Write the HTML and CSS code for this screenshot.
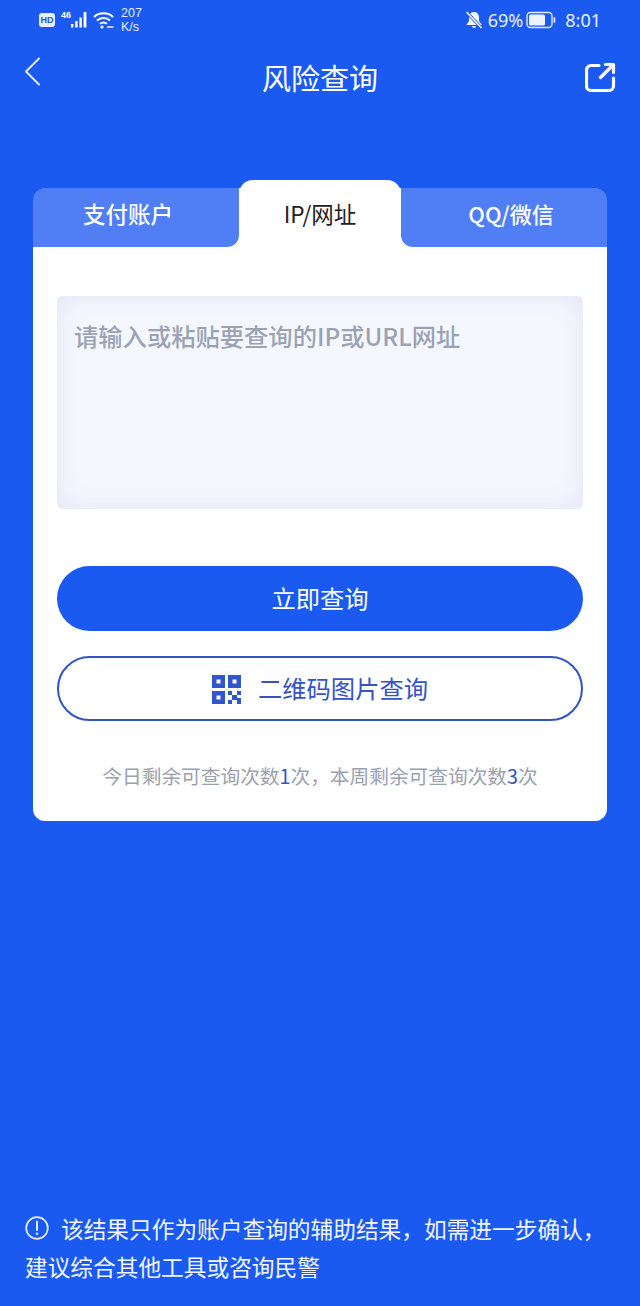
FILE: index.html
```html
<!DOCTYPE html>
<html lang="zh-CN">
<head>
    <meta charset="UTF-8">
    <meta name="viewport" content="width=device-width, initial-scale=1.0">
    <title>风险查询</title>
    <link rel="stylesheet" href="styles.css">
</head>
<body>
<div class="page">

    <div class="status">
        <div class="status-left">
            <span class="hd">HD</span>
            <span class="net">46</span>
            <svg class="signal" width="18" height="18" viewBox="0 0 18 18" fill="#fff">
                <rect x="0" y="13" width="2.4" height="3.5"/>
                <rect x="4.2" y="10" width="2.4" height="6.5"/>
                <rect x="8.4" y="6.5" width="2.4" height="10"/>
                <rect x="12.6" y="1" width="2.8" height="15.5"/>
            </svg>
            <svg class="wifi" width="21" height="18" viewBox="0 0 21 18" fill="none" stroke="#fff" stroke-width="2">
                <path d="M1 6 C6 1 15 1 20 6"/>
                <path d="M4 9.500 C7.500 6.300 13.500 6.300 17 9.500"/>
                <path d="M7 12.800 C9 11.300 12 11.300 14 12.800"/>
                <circle cx="9" cy="16" r="1.600" fill="#fff" stroke="none"/>
                <path d="M14 16 H20.500" stroke-width="1.400"/>
            </svg>
            <div class="speed">207<br>K/s</div>
        </div>
        <div class="status-right">
            <svg width="18" height="18" viewBox="0 0 18 18" fill="#fff">
                <path d="M9 1 C12.500 1 14 4 14 7 V10 L17 14 H1.500 L4 10 V7 C4 4 5.500 1 9 1 Z"/>
                <path d="M7 15.200 H11 C11 17.500 7 17.500 7 15.200 Z"/>
                <path d="M1.500 1 L16.500 17" stroke="#1b5af0" stroke-width="3.200"/>
                <path d="M1.500 1 L16.500 17" stroke="#fff" stroke-width="1.400"/>
            </svg>
            <span class="pct">69%</span>
            <svg class="battery" width="30" height="18" viewBox="0 0 30 18">
                <rect x="1" y="1.500" width="25" height="15" rx="3.500" fill="none" stroke="#dfe8fd" stroke-width="1.400"/>
                <rect x="3" y="3.500" width="16" height="11" rx="1.500" fill="#eef2fd"/>
                <rect x="27.500" y="6" width="1.800" height="6" rx="0.900" fill="#dfe8fd"/>
            </svg>
            <span class="time">8:01</span>
        </div>
    </div>

    <div class="nav">
        <div class="nav-left">
            <svg width="17" height="29" viewBox="0 0 17 29" fill="none" stroke="#eef2fd" stroke-width="1.800" stroke-linecap="round" stroke-linejoin="round">
                <path d="M15 1.500 L2 14.500 L15 27.500"/>
            </svg>
        </div>
        <div class="nav-title">风险查询</div>
        <div class="nav-right">
            <svg width="31" height="30" viewBox="0 0 31 30" fill="none" stroke="#fff" stroke-width="3.200" stroke-linecap="round" stroke-linejoin="round">
                <path d="M14 3.500 H6 A4.500 4.500 0 0 0 1.500 8 V24 A4.500 4.500 0 0 0 6 28.500 H24 A4.500 4.500 0 0 0 28.500 24 V16"/>
                <path d="M15.500 15.500 L27 4"/>
                <path d="M20.500 2.500 H28.500 V10.500"/>
            </svg>
        </div>
    </div>

    <div class="card">
        <div class="tabs">
            <div class="tab tab-first">支付账户</div>
            <div class="tab tab-active">IP/网址</div>
            <div class="tab tab-last">QQ/微信</div>
        </div>
        <div class="card-body">
            <div class="input-box">请输入或粘贴要查询的IP或URL网址</div>
            <button class="btn btn-primary">立即查询</button>
            <button class="btn btn-outline">
                <svg width="29" height="29" viewBox="0 0 29 29" fill="#3154cf">
                    <path fill-rule="evenodd" d="M0 0 H13 V13 H0 Z M4.500 4.500 V8.500 H8.500 V4.500 Z"/>
                    <path fill-rule="evenodd" d="M16 0 H29 V13 H16 Z M20.500 4.500 V8.500 H24.500 V4.500 Z"/>
                    <path fill-rule="evenodd" d="M0 16 H13 V29 H0 Z M4.500 20.500 V24.500 H8.500 V20.500 Z"/>
                    <rect x="16" y="16" width="4" height="4"/>
                    <rect x="25" y="16" width="4" height="4"/>
                    <rect x="20" y="20" width="5" height="5"/>
                    <rect x="16" y="25" width="4" height="4"/>
                    <rect x="25" y="23" width="4" height="6"/>
                </svg>
                <span>二维码图片查询</span>
            </button>
            <div class="quota">今日剩余可查询次数<b>1</b>次，本周剩余可查询次数<b>3</b>次</div>
        </div>
    </div>

    <div class="notice">
        <svg class="notice-icon" width="24" height="24" viewBox="0 0 24 24" fill="none" stroke="#e6edfe" stroke-width="1.700">
            <circle cx="12" cy="12" r="10.800"/>
            <path d="M12 5.500 V14" stroke-width="2" stroke-linecap="round"/>
            <circle cx="12" cy="17.800" r="1.200" fill="#e6edfe" stroke="none"/>
        </svg>该结果只作为账户查询的辅助结果，如需进一步确认，<br>建议综合其他工具或咨询民警
    </div>

</div>
</body>
</html>
```

FILE: styles.css
```css
* {
    box-sizing: border-box;
}
body {
    margin: 0;
    font-family: "Noto Sans CJK SC", "Noto Sans", sans-serif;
    background: #1b5af0;
}
.page {
    width: 640px;
    height: 1306px;
    display: flex;
    flex-direction: column;
    overflow: hidden;
    color: #fff;
}

/* status bar */
.status {
    height: 40px;
    padding: 0 39px 0 39px;
    display: flex;
    justify-content: space-between;
    align-items: center;
}
.status-left,
.status-right {
    display: flex;
    align-items: center;
}
.hd {
    width: 16px;
    height: 14px;
    border-radius: 3px;
    background: #eaf0fe;
    color: #1b5af0;
    font-family: "Liberation Sans", sans-serif;
    font-size: 9px;
    font-weight: bold;
    line-height: 14px;
    text-align: center;
}
.net {
    margin: -10px 0 0 6px;
    font-family: "Liberation Sans", sans-serif;
    font-size: 9px;
    font-weight: bold;
    line-height: 10px;
}
.signal {
    margin-left: 0;
}
.wifi {
    margin-left: 4px;
}
.speed {
    margin-left: 7px;
    font-family: "Liberation Sans", sans-serif;
    font-size: 12.500px;
    line-height: 14.500px;
    color: #e6edfe;
}
.pct,
.time {
    font-family: "Noto Sans", sans-serif;
    font-size: 18px;
    color: #eaf0fe;
}
.pct {
    margin: 0 3px 0 5px;
}
.time {
    margin-left: 9px;
}

/* nav */
.nav {
    height: 78px;
    padding: 0 24px;
    display: grid;
    grid-template-columns: 1fr auto 1fr;
    align-items: center;
}
.nav-left {
    padding-bottom: 15px;
    line-height: 0;
}
.nav-right {
    padding-bottom: 5px;
    line-height: 0;
    text-align: right;
}
.nav-title {
    font-size: 29px;
    line-height: 40px;
    padding-bottom: 4px;
}

/* card */
.card {
    margin: 70px 33px 0;
    height: 633px;
    background: #fff;
    border-radius: 16px 16px 12px 12px;
}
.tabs {
    margin-top: -8px;
    height: 67px;
    display: grid;
    grid-template-columns: 206px 162px 206px;
    align-items: end;
}
.tab {
    height: 59px;
    background: #4f7ef5;
    color: #fff;
    font-size: 22.500px;
    font-weight: 500;
    line-height: 51px;
    text-align: center;
}
.tab-first {
    padding-right: 16px;
    border-radius: 12px 0 12px 0;
}
.tab-last {
    padding-left: 14px;
    font-size: 22px;
    border-radius: 0 12px 0 12px;
}
.tab-active {
    height: 67px;
    background: #fff;
    color: #222;
    font-weight: 400;
    line-height: 67px;
    border-radius: 14px 14px 0 0;
}
.card-body {
    padding: 49px 24px 0;
    display: flex;
    flex-direction: column;
}
.input-box {
    height: 213px;
    padding: 20px 17px;
    border-radius: 6px;
    background: #f5f7fe;
    box-shadow: inset 0 0 26px #e1e5f6;
    color: #9aa3b6;
    font-size: 24.300px;
    line-height: 40px;
    font-weight: 500;
}
.btn {
    height: 65px;
    border-radius: 33px;
    padding-bottom: 3px;
    font-family: inherit;
    font-size: 24.300px;
    display: flex;
    align-items: center;
    justify-content: center;
}
.btn-primary {
    margin-top: 57px;
    border: 0;
    background: #1b5af0;
    color: #fff;
}
.btn-outline {
    margin-top: 25px;
    gap: 17px;
    border: 2px solid #3154c4;
    background: #fff;
    color: #3453c4;
}
.btn-outline svg {
    margin-top: 3px;
}
.quota {
    margin-top: 41px;
    color: #9ba1ae;
    font-size: 19.700px;
    line-height: 28px;
    text-align: center;
}
.quota b {
    color: #3154c4;
    font-weight: 400;
}

/* bottom note */
.notice {
    margin-top: auto;
    padding: 0 20px 20px 25px;
    font-size: 22.700px;
    line-height: 38px;
    white-space: nowrap;
    color: #f2f5fe;
}
.notice-icon {
    margin-right: 12px;
    vertical-align: -2px;
}
```
